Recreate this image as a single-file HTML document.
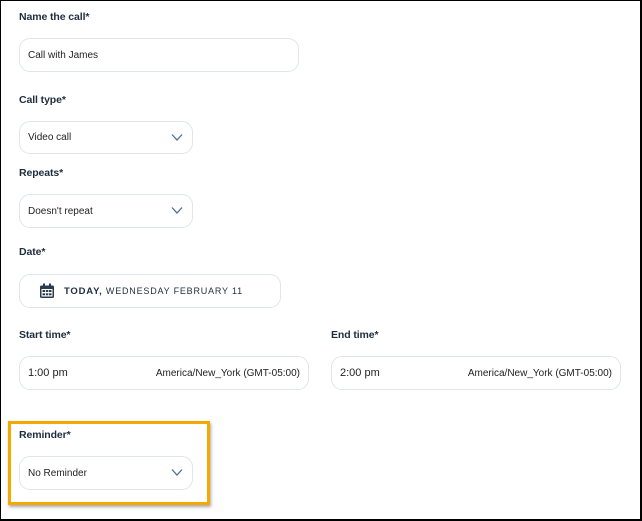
<!DOCTYPE html>
<html><head><meta charset="utf-8"><style>
*{box-sizing:border-box;margin:0;padding:0}
body{width:642px;height:521px;background:#fff;font-family:"Liberation Sans",sans-serif;color:#1c2b3a;position:relative;overflow:hidden}
.frame{position:absolute;left:0;top:0;width:642px;height:521px;border:1px solid #000;border-right-width:2px;border-bottom-width:2px}
.lbl{position:absolute;font-size:10.5px;font-weight:bold;color:#1f2d3d;letter-spacing:-0.1px}
.box{position:absolute;border:1px solid #dfe5ec;border-radius:11px;background:#fff;font-size:10px;color:#222;display:flex;align-items:center;padding-left:8px}
.chev{position:absolute;right:9px;top:50%;margin-top:-5px}
.hl{position:absolute;left:8px;top:421px;width:202px;height:84px;border:3px solid #f5a800;box-shadow:1px 2px 3px rgba(0,0,0,0.35)}
</style></head><body>
<div class="frame"></div>
<div class="lbl" style="left:19px;top:11px">Name the call*</div>
<div class="box" style="left:19px;top:38px;width:280px;height:34px">Call with James</div>
<div class="lbl" style="left:19px;top:94px">Call type*</div>
<div class="box" style="left:19px;top:121px;width:174px;height:33px">Video call<svg class="chev" width="12" height="9" viewBox="0 0 12 9"><path d="M1 1.5 L6 7 L11 1.5" fill="none" stroke="#4a6f9c" stroke-width="1.3"/></svg></div>
<div class="lbl" style="left:19px;top:167px">Repeats*</div>
<div class="box" style="left:19px;top:194px;width:174px;height:34px">Doesn't repeat<svg class="chev" width="12" height="9" viewBox="0 0 12 9"><path d="M1 1.5 L6 7 L11 1.5" fill="none" stroke="#4a6f9c" stroke-width="1.3"/></svg></div>
<div class="lbl" style="left:19px;top:246px">Date*</div>
<div class="box" style="left:19px;top:274px;width:262px;height:34px;padding-left:19px;font-size:9px;letter-spacing:0.8px;color:#1f2d3d">
<svg width="16" height="16" viewBox="0 0 16 16" style="margin-right:9px"><rect x="1" y="2.5" width="14" height="12.5" rx="1.5" fill="#2b3b4f"/><rect x="4" y="0.5" width="2" height="4" fill="#2b3b4f"/><rect x="10" y="0.5" width="2" height="4" fill="#2b3b4f"/><rect x="2.5" y="6" width="11" height="7.5" fill="#fff"/><g fill="#2b3b4f"><rect x="3.5" y="7" width="2.5" height="2"/><rect x="6.8" y="7" width="2.5" height="2"/><rect x="10" y="7" width="2.5" height="2"/><rect x="3.5" y="10.3" width="2.5" height="2"/><rect x="6.8" y="10.3" width="2.5" height="2"/><rect x="10" y="10.3" width="2.5" height="2"/></g></svg>
<b style="font-size:9.5px">TODAY,</b>&nbsp;WEDNESDAY FEBRUARY 11</div>
<div class="lbl" style="left:19px;top:329px">Start time*</div>
<div class="box" style="left:19px;top:356px;width:290px;height:34px;font-size:11px;justify-content:space-between;padding-right:8px"><span>1:00 pm</span><span style="font-size:10px">America/New_York (GMT-05:00)</span></div>
<div class="lbl" style="left:331px;top:329px">End time*</div>
<div class="box" style="left:331px;top:356px;width:290px;height:34px;font-size:11px;justify-content:space-between;padding-right:8px"><span>2:00 pm</span><span style="font-size:10px">America/New_York (GMT-05:00)</span></div>
<div class="hl"></div>
<div class="lbl" style="left:19px;top:429px">Reminder*</div>
<div class="box" style="left:19px;top:456px;width:174px;height:34px">No Reminder<svg class="chev" width="12" height="9" viewBox="0 0 12 9"><path d="M1 1.5 L6 7 L11 1.5" fill="none" stroke="#4a6f9c" stroke-width="1.3"/></svg></div>
</body></html>
